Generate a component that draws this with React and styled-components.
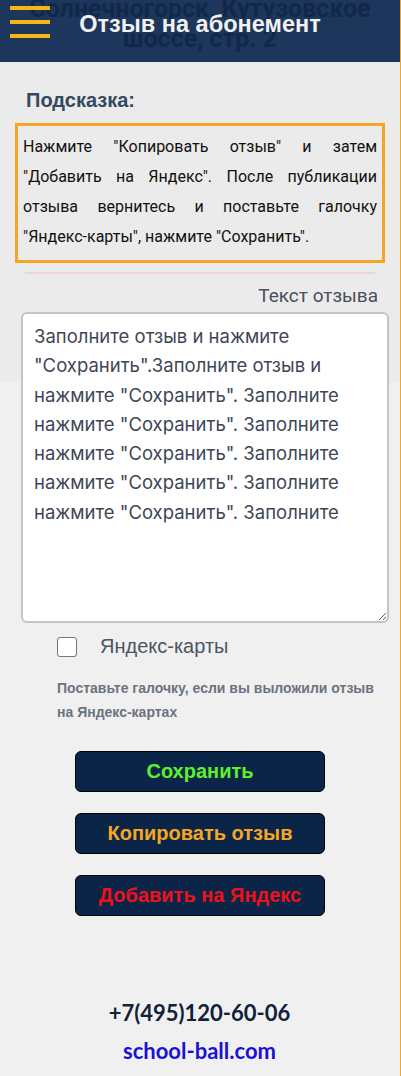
import React from 'react'
import styled, { createGlobalStyle } from 'styled-components'

const GlobalStyle = createGlobalStyle`
	html, body {
		margin: 0;
		padding: 0;
		background: #f0f0f0;
	}

	* {
		box-sizing: border-box;
	}
`

const Page = styled.div`
	width: 401px;
	min-height: 1076px;
	border-right: 1px solid #f5a623;
	background: linear-gradient(to bottom, #ebebeb 0, #ebebeb 382px, #f0f0f0 382px);
	font-family: Roboto, 'Liberation Sans', Arial, sans-serif;
`

const Header = styled.header`
	position: relative;
	display: flex;
	align-items: center;
	justify-content: center;
	height: 62px;
	overflow: hidden;
	background: #1c365c;
`

const Address = styled.div`
	position: absolute;
	top: -6px;
	left: 0;
	right: 0;
	text-align: center;
	font-family: Roboto, sans-serif;
	font-size: 25px;
	font-weight: 700;
	line-height: 30px;
	color: #12284a;
`

const Burger = styled.div`
	position: absolute;
	left: 10px;
	top: 6px;
	display: flex;
	flex-direction: column;
	gap: 10px;

	span {
		display: block;
		width: 40px;
		height: 4px;
		background: #f9b41a;
	}
`

const Title = styled.h1`
	position: relative;
	margin: 0 0 14px;
	font-family: 'Liberation Sans', Arial, sans-serif;
	font-size: 23.5px;
	font-weight: 700;
	color: #f1f1f1;
`

const Content = styled.main`
	display: flex;
	flex-direction: column;
	padding: 0 12px 0 15px;
`

const Heading = styled.h2`
	margin: 26px 0 0 11px;
	font-family: 'Liberation Sans', Arial, sans-serif;
	font-size: 20px;
	line-height: 24px;
	font-weight: 700;
	color: #34495e;
`

const HintBox = styled.div`
	margin-top: 11px;
	width: 370px;
	padding: 6px 5px 8px 5px;
	border: 3px solid #f5a623;
	font-size: 16px;
	line-height: 30px;
	text-align: justify;
	color: #111;
`

const Divider = styled.hr`
	margin: 9px 0 0 10px;
	width: 350px;
	height: 2px;
	border: 0;
	background: #ecd6dd;
`

const FieldLabel = styled.label`
	align-self: flex-end;
	margin: 11px 10px 0 0;
	font-size: 19px;
	line-height: 22px;
	color: #4a4f5c;
`

const ReviewInput = styled.textarea`
	display: block;
	margin: 5px 0 0 6px;
	width: 368px;
	height: 311px;
	padding: 8px 11px;
	border: 2px solid #c4c4c4;
	border-radius: 6px;
	background: #fff;
	font-family: Inter, 'Liberation Sans', sans-serif;
	font-size: 18.5px;
	line-height: 29.3px;
	color: #3e4656;
	resize: vertical;
	outline: none;
`

const CheckRow = styled.label`
	display: flex;
	align-items: center;
	gap: 23px;
	margin: 12px 0 0 42px;
	font-family: 'Liberation Sans', Arial, sans-serif;
	font-size: 20px;
	color: #4b5563;
`

const Box = styled.input`
	appearance: none;
	margin: 0;
	width: 20px;
	height: 20px;
	border: 1px solid #767676;
	border-radius: 3px;
	background: #fff;
`

const Help = styled.p`
	margin: 18px 0 0 42px;
	font-family: 'Liberation Sans', Arial, sans-serif;
	font-size: 14px;
	font-weight: 700;
	line-height: 24px;
	color: #6b7380;
`

const Actions = styled.div`
	display: flex;
	flex-direction: column;
	align-items: center;
	gap: 21px;
	margin: 27px 0 0 -3px;
`

const ActionButton = styled.button`
	width: 250px;
	height: 41px;
	border: 1px solid #000;
	border-radius: 6px;
	background: #0b2548;
	font-family: 'Liberation Sans', Arial, sans-serif;
	font-size: 20px;
	font-weight: 700;
	color: ${({ tone }) => tone};
	cursor: pointer;
`

const Footer = styled.footer`
	display: flex;
	flex-direction: column;
	align-items: center;
	gap: 8px;
	margin-top: 82px;
	padding-right: 1px;
	font-family: Lato, sans-serif;
	font-weight: 700;
	font-size: 22px;
	line-height: 30px;
`

const Phone = styled.div`
	color: #10213a;
`

const Site = styled.a`
	color: #1a10d8;
	text-decoration: none;
`

const reviewText = [
	'Заполните отзыв и нажмите',
	'"Сохранить".Заполните отзыв и',
	'нажмите "Сохранить". Заполните',
	'нажмите "Сохранить". Заполните',
	'нажмите "Сохранить". Заполните',
	'нажмите "Сохранить". Заполните',
	'нажмите "Сохранить". Заполните'
].join('\n')

const App = () => (
	<>
		<GlobalStyle />
		<Page>
			<Header>
				<Address>
					Солнечногорск, Кутузовское
					<br />
					шоссе, стр. 2
				</Address>
				<Burger>
					<span />
					<span />
					<span />
				</Burger>
				<Title>Отзыв на абонемент</Title>
			</Header>

			<Content>
				<Heading>Подсказка:</Heading>
				<HintBox>
					Нажмите "Копировать отзыв" и затем "Добавить на Яндекс". После публикации отзыва
					вернитесь и поставьте галочку "Яндекс-карты", нажмите "Сохранить".
				</HintBox>
				<Divider />
				<FieldLabel htmlFor="review">Текст отзыва</FieldLabel>
				<ReviewInput id="review" defaultValue={reviewText} />

				<CheckRow>
					<Box type="checkbox" />
					Яндекс-карты
				</CheckRow>
				<Help>
					Поставьте галочку, если вы выложили отзыв
					<br />
					на Яндекс-картах
				</Help>

				<Actions>
					<ActionButton tone="#5cf12c">Сохранить</ActionButton>
					<ActionButton tone="#f5a623">Копировать отзыв</ActionButton>
					<ActionButton tone="#ee1118">Добавить на Яндекс</ActionButton>
				</Actions>
			</Content>

			<Footer>
				<Phone>+7(495)120-60-06</Phone>
				<Site href="#">school-ball.com</Site>
			</Footer>
		</Page>
	</>
)

export default App
